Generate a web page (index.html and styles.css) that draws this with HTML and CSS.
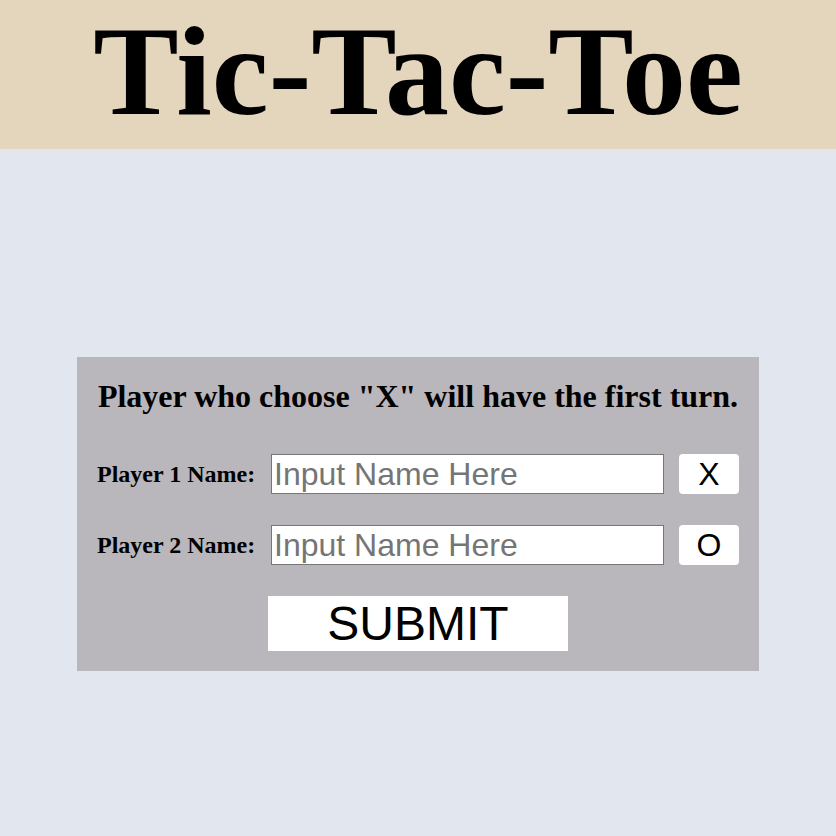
FILE: index.html
```html
<!DOCTYPE html>
<html>
<head>
<meta charset="utf-8">
<title>Tic-Tac-Toe</title>
<link rel="stylesheet" href="styles.css">
</head>
<body>
<header class="header">
  <h1 class="title">Tic-Tac-Toe</h1>
</header>
<main class="main">
  <form class="panel">
    <h2 class="notice">Player who choose "X" will have the first turn.</h2>
    <div class="row">
      <label class="label">Player 1 Name:</label>
      <input class="name-input" type="text" placeholder="Input Name Here">
      <button type="button" class="mark">X</button>
    </div>
    <div class="row">
      <label class="label">Player 2 Name:</label>
      <input class="name-input" type="text" placeholder="Input Name Here">
      <button type="button" class="mark">O</button>
    </div>
    <div class="submit-row">
      <button type="button" class="submit">SUBMIT</button>
    </div>
  </form>
</main>
</body>
</html>
```
FILE: styles.css
```css
html, body {
  margin: 0;
  padding: 0;
}
body {
  background: #e2e6ef;
  font-family: "Liberation Serif", "Times New Roman", serif;
  width: 836px;
  height: 836px;
  overflow: hidden;
}
.header {
  box-sizing: border-box;
  background: #e4d6bd;
  height: 149px;
  padding-top: 4px;
  display: flex;
  justify-content: center;
  align-items: flex-start;
}
.title {
  margin: 0;
  font-size: 128px;
  font-weight: bold;
  line-height: 135px;
  color: #000;
}
.main {
  display: flex;
  justify-content: center;
  padding-top: 208px;
}
.panel {
  width: 642px;
  background: #b9b6bc;
  padding: 20px;
  display: flex;
  flex-direction: column;
}
.notice {
  margin: 0 0 39px 0;
  font-size: 32px;
  font-weight: bold;
  line-height: 38px;
  text-align: center;
  white-space: nowrap;
}
.row {
  display: flex;
  align-items: center;
  height: 40px;
  margin-bottom: 31px;
}
.label {
  font-size: 24px;
  font-weight: bold;
  width: 174px;
}
.name-input {
  box-sizing: border-box;
  width: 393px;
  height: 40px;
  border: 1px solid #767676;
  padding: 0 2px;
  font-family: "Liberation Sans", Arial, sans-serif;
  font-size: 32px;
  margin: 0;
}
.name-input::placeholder {
  color: #757575;
}
.mark {
  box-sizing: border-box;
  margin-left: 15px;
  width: 60px;
  height: 40px;
  background: #fff;
  border: none;
  border-radius: 4px;
  font-family: "Liberation Sans", Arial, sans-serif;
  font-size: 32px;
  color: #000;
  padding: 0;
}
.submit-row {
  display: flex;
  justify-content: center;
}
.submit {
  width: 300px;
  height: 55px;
  background: #fff;
  border: none;
  border-radius: 0;
  font-family: "Liberation Sans", Arial, sans-serif;
  font-size: 48px;
  color: #000;
  padding: 0;
}
```
